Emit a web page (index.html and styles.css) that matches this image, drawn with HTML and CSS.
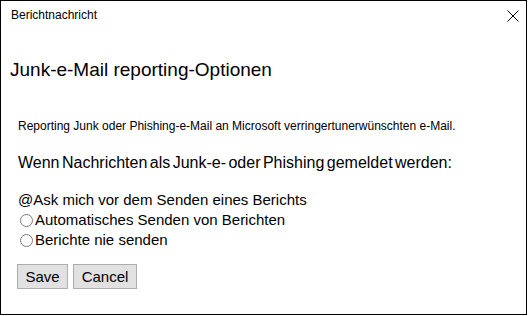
FILE: index.html
```html
<!DOCTYPE html>
<html lang="de">
<head>
<meta charset="utf-8">
<title>Berichtnachricht</title>
<link rel="stylesheet" href="styles.css">
</head>
<body>
<div class="window">
  <div class="titlebar">
    <span class="title">Berichtnachricht</span>
    <svg class="close" width="12" height="12" viewBox="0 0 12 12" aria-hidden="true">
      <path d="M0.5 0.5 L11.5 11.5 M11.5 0.5 L0.5 11.5" stroke="#000" stroke-width="1" fill="none"/>
    </svg>
  </div>
  <div class="content">
    <h1 class="heading">Junk-e-Mail reporting-Optionen</h1>
    <p class="desc">Reporting Junk oder Phishing-e-Mail an Microsoft verringertunerwünschten e-Mail.</p>
    <p class="question">Wenn Nachrichten als Junk-e- oder Phishing gemeldet werden:</p>
    <div class="options">
      <div class="option">@Ask mich vor dem Senden eines Berichts</div>
      <label class="option"><input type="radio" name="r" class="radio">Automatisches Senden von Berichten</label>
      <label class="option"><input type="radio" name="r" class="radio">Berichte nie senden</label>
    </div>
    <div class="buttons">
      <button class="btn btn-save">Save</button>
      <button class="btn btn-cancel">Cancel</button>
    </div>
  </div>
</div>
</body>
</html>
```
FILE: styles.css
```css
html, body {
  margin: 0;
  padding: 0;
  background: #fff;
}
body {
  font-family: "Liberation Sans", Arial, sans-serif;
  color: #000;
}
.window {
  box-sizing: border-box;
  width: 527px;
  height: 315px;
  border: 1px solid #000;
  background: #fff;
}
.titlebar {
  display: flex;
  justify-content: space-between;
  align-items: flex-start;
  height: 30px;
  padding: 7px 7px 0 10px;
  box-sizing: border-box;
}
.title {
  font-size: 12px;
  line-height: 14px;
}
.close {
  display: block;
  margin-top: 2px;
}
.content {
  padding-left: 17px;
}
.heading {
  margin: 28px 0 0 -8px;
  font-size: 19px;
  font-weight: normal;
  line-height: 22px;
}
.desc {
  margin: 38px 0 0 0;
  font-size: 12px;
  line-height: 14px;
}
.question {
  margin: 21px 0 0 0;
  font-size: 16px;
  line-height: 18px;
  word-spacing: -2px;
}
.options {
  margin-top: 18px;
  display: flex;
  flex-direction: column;
}
.option {
  display: flex;
  align-items: center;
  font-size: 15px;
  line-height: 20px;
  height: 20px;
}
.radio {
  appearance: none;
  -webkit-appearance: none;
  box-sizing: border-box;
  width: 13px;
  height: 13px;
  margin: 0 2px 0 2px;
  border: 1px solid #7a7a7a;
  border-radius: 50%;
  background: #fff;
}
.buttons {
  display: flex;
  gap: 5px;
  margin-top: 14px;
  margin-left: -1px;
}
.btn {
  box-sizing: border-box;
  height: 25px;
  padding: 0;
  font-family: "Liberation Sans", Arial, sans-serif;
  font-size: 15px;
  color: #000;
  background: #e1e1e1;
  border: 1px solid #adadad;
  border-radius: 0;
}
.btn-save {
  width: 51px;
}
.btn-cancel {
  width: 64px;
}
```
